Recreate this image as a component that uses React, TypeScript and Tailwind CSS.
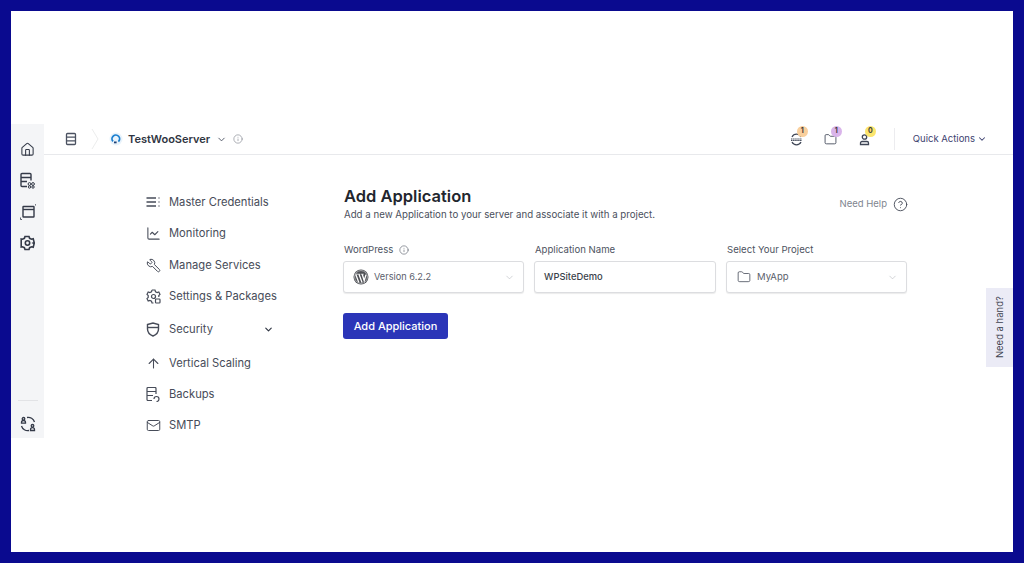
import { ChevronDown, CircleHelp, Info, Folder, Home, ArrowUp, Mail, Wrench, LineChart } from "lucide-react";
import type { ReactNode } from "react";

function ServerIcon() {
  return (
    <svg width="12" height="14" viewBox="0 0 12 14" fill="none" stroke="currentColor" strokeWidth="1.3">
      <rect x="1.5" y="1.5" width="9" height="11" rx="1" />
      <path d="M1.5 5.2h9M1.5 8.8h9" />
    </svg>
  );
}

function Logo() {
  return (
    <svg width="14" height="14" viewBox="0 0 14 14" fill="none">
      <circle cx="7" cy="7" r="6.5" fill="#e9f3fb" />
      <path d="M4 9.4A3.8 3.8 0 1 1 9.4 9.6" stroke="#1b7fcf" strokeWidth="1.8" />
      <path d="M5 10.4h2.6" stroke="#1d3f72" strokeWidth="1.8" />
    </svg>
  );
}

function RailIcons() {
  return (
    <div className="flex flex-col items-center gap-[15px] pt-[18px] text-[#343a48]">
      <Home size={15} strokeWidth={1.7} />
      <svg width="15" height="17" viewBox="0 0 15 17" fill="none" stroke="currentColor" strokeWidth="1.4">
        <path d="M7 14.5H2a1 1 0 0 1-1-1v-11a1 1 0 0 1 1-1h8a1 1 0 0 1 1 1v6" />
        <path d="M1 5.5h10M1 9.5h6" />
        <circle cx="9.5" cy="12" r="1.4" strokeWidth="1" />
        <circle cx="13" cy="12" r="1.4" strokeWidth="1" />
        <circle cx="9.5" cy="15" r="1.2" strokeWidth="1" />
        <circle cx="13" cy="15" r="1.2" strokeWidth="1" />
      </svg>
      <svg width="16" height="16" viewBox="0 0 16 16" fill="none" stroke="currentColor" strokeWidth="1.4">
        <rect x="3" y="2.5" width="11" height="10.5" rx="0.5" />
        <path d="M3 5.5h11" />
        <path d="M15 0.5h0.5v1M0.5 13.5v2h1.5" strokeWidth="0.8" />
      </svg>
      <svg width="15" height="16" viewBox="0 0 15 16" fill="none" stroke="currentColor" strokeWidth="1.6">
        <path d="M5 1.5h4l.6 1.8 2 .9 1.6-.4 1 3.7-1 .5 1 .5-1 3.7-1.6-.4-2 .9-.6 1.8H5l-.6-1.8-2-.9-1.2.3V3.9l1.2.3 2-.9z" />
        <circle cx="7.5" cy="8" r="2.2" />
      </svg>
    </div>
  );
}

function SwapIcon() {
  return (
    <svg width="16" height="16" viewBox="0 0 16 16" fill="none" stroke="#343a48" strokeWidth="1.3" className="mt-[15px]">
      <path d="M7 1.5A6.5 6.5 0 0 1 14.5 6M9 14.5A6.5 6.5 0 0 1 1.500 10" />
      <circle cx="3.5" cy="2.8" r="1.3" />
      <path d="M1.5 7.2V6.500a2 2 0 0 1 4 0v.7z" />
      <circle cx="12.5" cy="9.800" r="1.300" />
      <path d="M10.500 14.500v-.8a2 2 0 0 1 4 0v.8z" />
    </svg>
  );
}

function Badge({ color, value }: { color: string; value: string }) {
  return (
    <span
      className={`absolute -top-[7px] left-[7px] flex h-[11px] w-[11px] items-center justify-center rounded-full text-[7px] font-bold text-[#3d3d3d] ${color}`}
    >
      {value}
    </span>
  );
}

function Header() {
  return (
    <div className="flex h-[31px] items-center border-b border-[#e8e9ec] pl-[21px] pr-[26px]">
      <span className="text-[#4b5261]">
        <ServerIcon />
      </span>
      <svg width="8" height="22" viewBox="0 0 8 22" fill="none" stroke="#eceded" className="ml-[14px]">
        <path d="M1 1l6 10-6 10" />
      </svg>
      <span className="ml-[10px]">
        <Logo />
      </span>
      <span className="ml-[5px] text-[11px] font-semibold text-[#2f3542]">TestWooServer</span>
      <ChevronDown size={11} strokeWidth={2} className="ml-[6px] text-[#4b5261]" />
      <Info size={10} strokeWidth={1.5} className="ml-[6px] text-[#7d828c]" />
      <div className="ml-auto flex items-center">
        <div className="relative text-[#3f4656]">
          <svg width="13" height="13" viewBox="0 0 13 13" fill="none" stroke="currentColor" strokeWidth="1.2">
            <path d="M2 4A5 5 0 0 1 11 4M2 9a5 5 0 0 0 9 0" />
            <path d="M1 6h11M1 7.5h11" strokeDasharray="1.5 0.6" />
          </svg>
          <Badge color="bg-[#f9cf9c]" value="1" />
        </div>
        <div className="relative ml-[21px] text-[#3f4656]">
          <Folder size={13} strokeWidth={1.6} />
          <Badge color="bg-[#d9b4ea]" value="1" />
        </div>
        <div className="relative ml-[21px] text-[#3f4656]">
          <svg width="13" height="13" viewBox="0 0 13 13" fill="none" stroke="currentColor" strokeWidth="1.3">
            <circle cx="6.5" cy="4" r="2.2" />
            <path d="M2.5 11.5V10A1.5 1.5 0 0 1 4 8.5h5A1.5 1.5 0 0 1 10.5 10v1.5z" />
          </svg>
          <Badge color="bg-[#fbe56d]" value="0" />
        </div>
        <div className="ml-[23px] h-[22px] w-px bg-[#ececef]" />
        <span className="ml-[18px] text-[9.5px] text-[#3d4270]">Quick Actions</span>
        <ChevronDown size={10} strokeWidth={2.5} className="ml-[2px] text-[#3d4270]" />
      </div>
    </div>
  );
}

function NavItem({ icon, label, chevron }: { icon: ReactNode; label: string; chevron?: boolean }) {
  return (
    <div className="flex h-[16px] items-center text-[#474c59]">
      <span className="flex w-[16px] shrink-0 justify-center">{icon}</span>
      <span className="ml-[8px] whitespace-nowrap text-[11.2px]">{label}</span>
      {chevron && <ChevronDown size={11} strokeWidth={2.5} className="ml-auto mr-[1px] text-[#2f3542]" />}
    </div>
  );
}

function SideNav() {
  return (
    <div className="ml-[101px] flex w-[130px] flex-col pt-[39px]">
      <div className="flex flex-col gap-[15.5px]">
        <NavItem
          label="Master Credentials"
          icon={
            <svg width="15" height="12" viewBox="0 0 15 12" fill="none" stroke="currentColor" strokeWidth="1.3">
              <path d="M0.5 2H10M0.5 6H10M0.5 10H10M13 1.5v1M13 5.5v1M13 9.5v1" />
            </svg>
          }
        />
        <NavItem label="Monitoring" icon={<LineChart size={15} strokeWidth={1.7} />} />
        <NavItem label="Manage Services" icon={<Wrench size={15} strokeWidth={1.6} className="-scale-x-100" />} />
        <NavItem
          label="Settings & Packages"
          icon={
            <svg width="15" height="15" viewBox="0 0 15 15" fill="none" stroke="currentColor" strokeWidth="1.2">
              <path d="M6 1h3l.5 1.7 1.7.8 1.6-.6 1.2 2.4-1.2 1.2v1.5" />
              <path d="M6 1l-.5 1.7-1.7.8-1.6-.6L1 5.3l1.2 1.2v2L1 9.7l1.2 2.4 1.6-.6 1.7.8L6 14h1.500" />
              <circle cx="7.5" cy="7.5" r="2" />
              <rect x="9.5" y="10" width="4.5" height="4" rx="0.8" />
            </svg>
          }
        />
      </div>
      <div className="mt-[17px] flex flex-col gap-[17.5px]">
        <NavItem
          label="Security"
          chevron
          icon={
            <svg width="14" height="15" viewBox="0 0 14 15" fill="none" stroke="currentColor" strokeWidth="1.4">
              <path d="M1.5 2.5 7 1l5.5 1.5V7c0 3.5-2.5 5.8-5.5 7-3-1.2-5.500-3.500-5.500-7z" />
              <path d="M1.5 5.5h11" />
            </svg>
          }
        />
        <div className="flex flex-col gap-[15px]">
          <NavItem label="Vertical Scaling" icon={<ArrowUp size={15} strokeWidth={1.7} />} />
          <NavItem
            label="Backups"
            icon={
              <svg width="14" height="15" viewBox="0 0 14 15" fill="none" stroke="currentColor" strokeWidth="1.2">
                <path d="M6 13.5H2a1 1 0 0 1-1-1v-11a1 1 0 0 1 1-1h7a1 1 0 0 1 1 1V7" />
                <path d="M1 4.5h9M1 8.5h6" />
                <path d="M8 12a2.5 2.5 0 1 1 2.5 2.5" />
              </svg>
            }
          />
          <NavItem label="SMTP" icon={<Mail size={15} strokeWidth={1.6} />} />
        </div>
      </div>
    </div>
  );
}

function WpMark() {
  return (
    <svg width="16" height="16" viewBox="0 0 16 16">
      <circle cx="8" cy="8" r="7.5" fill="#4d4f54" />
      <circle cx="8" cy="8" r="6.4" fill="none" stroke="#fff" strokeWidth="0.5" />
      <path d="M2.8 5.5l3 8M6 5.2l3 8.3M9.2 5.3l2 6.5 1.8-6.2" fill="none" stroke="#fff" strokeWidth="1.3" />
      <path d="M2.5 5.2h4.7M7.8 5.2h3" stroke="#fff" strokeWidth="0.7" />
    </svg>
  );
}

function Field({ label, info, width, children }: { label: string; info?: boolean; width: string; children: ReactNode }) {
  return (
    <div className={width}>
      <div className="flex h-[14px] items-center gap-[6px] pl-px text-[9.6px] text-[#4d5361]">
        {label}
        {info && <Info size={10} strokeWidth={1.5} className="text-[#5a606c]" />}
      </div>
      <div className="mt-[4px] flex h-[32px] items-center rounded-[3px] border border-[#dcdde0] bg-white pl-[9px] pr-[8px] shadow-[0_1px_1px_rgba(0,0,0,0.08)]">
        {children}
      </div>
    </div>
  );
}

function Form() {
  return (
    <div className="ml-[68px] w-[565px] pt-[31px]">
      <div className="flex items-start justify-between">
        <div className="pl-px">
          <h1 className="text-[16.5px] font-semibold leading-[20px] text-[#22262e]">Add Application</h1>
          <p className="mt-[2px] text-[9.7px] leading-[14px] text-[#4a4f5c]">
            Add a new Application to your server and associate it with a project.
          </p>
        </div>
        <div className="mt-[11px] flex items-center gap-[6px] text-[9.5px] text-[#80858f]">
          Need Help
          <CircleHelp size={15} strokeWidth={1.5} className="text-[#4a4f5c]" />
        </div>
      </div>
      <div className="mt-[21px] flex gap-[10px]">
        <Field label="WordPress" info width="w-[181px]">
          <WpMark />
          <span className="ml-[5px] text-[9.2px] text-[#5b606b]">Version 6.2.2</span>
          <ChevronDown size={11} strokeWidth={1.3} className="ml-auto text-[#b5b8bd]" />
        </Field>
        <Field label="Application Name" width="w-[182px]">
          <span className="text-[9.4px] font-medium text-[#3a3f4a]">WPSiteDemo</span>
        </Field>
        <Field label="Select Your Project" width="w-[181px]">
          <Folder size={14} strokeWidth={1.4} className="ml-px text-[#4a4f5c]" />
          <span className="ml-[6px] text-[9.5px] text-[#5b606b]">MyApp</span>
          <ChevronDown size={11} strokeWidth={1.3} className="ml-auto text-[#b5b8bd]" />
        </Field>
      </div>
      <button className="mt-[20px] flex h-[26px] w-[105px] items-center justify-center rounded-[3px] bg-[#2b35b8] text-[11px] font-medium text-white">
        Add Application
      </button>
    </div>
  );
}

export default function App() {
  return (
    <div className="h-[563px] w-[1024px] bg-[#0a0a8f] p-[11px] font-['Inter',sans-serif]">
      <div className="relative flex h-[541px] bg-white pt-[113px]">
        <div className="flex h-[314px] w-[33px] flex-col justify-between bg-[#f4f5f7]">
          <RailIcons />
          <div className="flex flex-col items-center pb-[6px]">
            <div className="h-px w-[20px] bg-[#e2e3e6]" />
            <SwapIcon />
          </div>
        </div>
        <div className="flex-1">
          <Header />
          <div className="flex">
            <SideNav />
            <Form />
          </div>
        </div>
        <div className="absolute right-0 top-[277px] flex h-[79px] w-[27px] items-center justify-center bg-[#ebebf6] pl-px">
          <span className="-rotate-90 whitespace-nowrap text-[9.5px] text-[#3d4250]">Need a hand?</span>
        </div>
      </div>
    </div>
  );
}
